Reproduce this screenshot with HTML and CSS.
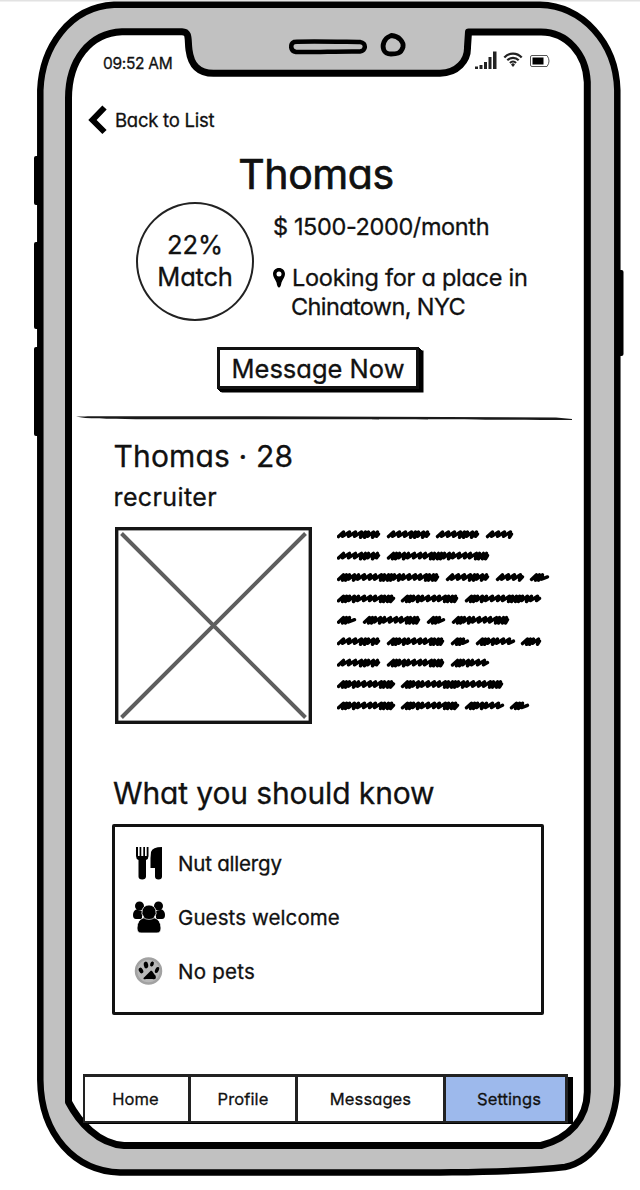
FILE: index.html
```
<!DOCTYPE html>
<html lang="en">
<head>
<meta charset="utf-8">
<title>Thomas</title>
<link rel="stylesheet" href="styles.css">
</head>
<body>
<div class="stage">
  <svg class="frame" width="640" height="1190" viewBox="0 0 640 1190">
    <path d="M0 .8H640" stroke="#e2e2e2" stroke-width="1.6"/>
    <g fill="#000">
      <rect x="34" y="156" width="8" height="49" rx="2"/>
      <rect x="34" y="242" width="8" height="87" rx="2"/>
      <rect x="34" y="347" width="8" height="89" rx="2"/>
      <rect x="614" y="270" width="9.5" height="86" rx="2"/>
    </g>
    <path d="M40.300 90C42 48 69 7 114 4.800H540C582 6 616 42 617.300 90V1085C616 1127 594 1161 565 1167C525 1172 480 1172 440 1172.500H120C75 1171 41 1135 40.300 1080Z" fill="#c1c1c1" stroke="#000" stroke-width="6.500"/>
    <path d="M68.500 100C68 60 90 33 122 31.700H182C190 32 187.500 39 189 50C191 65 198 73.500 214 73.300H440C457 73 468 61 467.500 47L468.500 32H541C567 32 586 54 587.300 82V1092C587 1118 570 1138 541 1145.500H124C98 1144 79 1122 68.500 1102Z" fill="#fff" stroke="#000" stroke-width="7" stroke-linejoin="round"/>
    <path d="M294 42C305 41 350 42 360 42C367 43 366 51 360 51.500C340 51 315 52.500 296 52C290 51 290 44 294 42Z" fill="#c1c1c1" stroke="#000" stroke-width="4.500"/>
    <path d="M391.500 35.500C399 36 404 42 403 47C401 54 396 54 391 54C383 54 382 47 384 42C386 37 388 37 391.500 35.500Z" fill="#c1c1c1" stroke="#000" stroke-width="4.800" stroke-linejoin="round"/>
  </svg>

  <main class="screen">
    <div class="status">
      <span class="time">09:52 AM</span>
      <svg width="76" height="18" viewBox="0 0 76 18">
        <path d="M0 15.500h3v2.500h-3zM4.500 14h3v4h-3zM9 11h3v7h-3zM13.500 6h3v12h-3zM18 .5h3.500V18H18z" fill="#222"/>
        <g fill="none" stroke="#222" stroke-width="2.200"><path d="M29.300 6.500C34 1.200 42 1.200 46.700 6.500M32.300 9.300C35.500 6 40.500 6 43.700 9.300M35 12C36.800 10 39.200 10 41 12"/></g>
        <path d="M38 12L40 13.500L38 16L36 13.500Z" fill="#222"/>
        <path d="M57 4.500H72Q76 10 72 15.500H57Q55.500 15.500 55.500 14V6Q55.500 4.500 57 4.500Z" fill="#fff" stroke="#555"/>
        <path d="M57.500 6.500h11v7h-11z"/>
      </svg>
    </div>

    <a class="back">
      <svg width="20" height="30" viewBox="0 0 20 30"><path d="M16.500 2.500L4.500 15L16.500 27" fill="none" stroke="#000" stroke-width="6"/></svg>
      <span>Back to List</span>
    </a>

    <h1 class="title">Thomas</h1>

    <section class="summary">
      <div class="match"><span>22%</span><span class="label">Match</span></div>
      <div class="facts">
        <p class="price">$ 1500-2000/month</p>
        <div class="place">
          <svg width="12" height="20" viewBox="0 0 12 20"><path fill-rule="evenodd" d="M6 0C2.500 0 0 2.600 0 6C0 9 2 11 3.500 14.500Q4.300 19.500 6 19.500Q7.700 19.500 8.500 14.500C10 11 12 9 12 6C12 2.600 9.500 0 6 0ZM6 3.500A2.500 2.500 0 1 1 6 8.500A2.500 2.500 0 0 1 6 3.500Z"/></svg>
          <p>Looking for a place in<br><span class="city">Chinatown, NYC</span></p>
        </div>
      </div>
    </section>

    <button class="message">Message Now</button>

    <svg class="rule" width="498" height="6" viewBox="0 0 498 6"><path d="M0 .5C10 0 60 .2 180 .2L480 1.500L496 3V4C440 3.500 380 3.600 270 3.200H60C30 2.800 10 3 0 .5Z" fill="#1a1a1a"/></svg>

    <section class="about">
      <h2 class="name">Thomas · 28</h2>
      <p class="job">recruiter</p>
      <div class="media">
        <svg width="197" height="197" viewBox="0 0 197 197"><rect x="1.700" y="1.700" width="193.600" height="193.600" fill="#fff" stroke="#151515" stroke-width="3.400"/><path d="M6.500 6.500L190.500 190.500M190.500 6.500L6.500 190.500" stroke="#5e5e5e" stroke-width="4"/></svg>
        <svg class="scribble" width="216" height="190" viewBox="0 0 216 190" fill="none" stroke="#000" stroke-width="3.400" stroke-linecap="round" stroke-linejoin="round"></svg>
      </div>
    </section>

    <section class="know">
      <h2>What you should know</h2>
      <ul class="card">
        <li>
          <svg width="34" height="34" viewBox="0 0 34 34"><path d="M4 1V10Q4 13 6.500 14V30.500Q6.500 33.500 10.200 33.500T14 30.500V14Q16.500 13 16.500 10V1H14.700V10H13V1H11.300V10H9.300V1H7.600V10H6V1ZM19 6Q20.500 1 30 1V30.500Q30 33.500 26.500 33.500T23 30.500V22H18.500V12Z"/></svg>
          <span class="nut">Nut allergy</span>
        </li>
        <li>
          <svg width="34" height="34" viewBox="0 0 34 34"><circle cx="7.500" cy="6" r="4.500"/><circle cx="26.500" cy="6" r="4.500"/><path d="M4 9.500Q1 11 1 15Q1 19 4 19H10V11ZM30 9.500Q33 11 33 15Q33 19 30 19H24V11Z"/><path d="M17 5a7.300 7.300 0 0 1 5 12.500Q29 20 29 28Q29 33 25 33H9Q5 33 5 28Q5 20 12 17.500A7.300 7.300 0 0 1 17 5Z" stroke="#fff" stroke-width=".8"/><path d="M11 17.500Q17 21.500 23 17.500" fill="none" stroke="#ccc" stroke-width=".8"/></svg>
          <span class="guests">Guests welcome</span>
        </li>
        <li>
          <svg width="34" height="34" viewBox="0 0 34 34"><circle cx="16.500" cy="17" r="12.500" fill="#b8b8b8" stroke="#a2a2a2" stroke-width="2.500"/><g fill="#000"><ellipse cx="9" cy="16.500" rx="2" ry="3" transform="rotate(-30 9 16.500)"/><ellipse cx="14" cy="11" rx="2.200" ry="3.400" transform="rotate(-10 14 11)"/><ellipse cx="20" cy="10" rx="1.800" ry="2.600" transform="rotate(20 20 10)"/><ellipse cx="25" cy="16" rx="1.800" ry="3.200" transform="rotate(25 25 16)"/><path d="M19 16.500C21 17 21.500 20 23.500 21.500Q25 26 20.500 25H14Q11 26 11.500 24Z"/></g></svg>
          <span class="pets">No pets</span>
        </li>
      </ul>
    </section>

    <nav class="tabs">
      <a class="home">Home</a>
      <a>Profile</a>
      <a class="messages">Messages</a>
      <a class="settings">Settings</a>
    </nav>
  </main>
</div>
<script src="scribble.js"></script>
</body>
</html>
```
FILE: styles.css
```
* { box-sizing: border-box; margin: 0; padding: 0; }
body { background: #fff; color: #111; font-family: Inter, "Open Sans", sans-serif; font-feature-settings: "cv11"; -webkit-text-stroke: .3px currentColor; }
svg { display: block; flex: none; }
.stage { display: grid; width: 640px; height: 1190px; }
.frame, .screen { grid-area: 1 / 1; }
h1, h2, p, span, a { white-space: nowrap; }
h1, h2 { font-weight: 400; }
.screen { display: flex; flex-direction: column; align-items: flex-start; }

.status { display: flex; justify-content: space-between; width: 551px; height: 24px; margin-top: 51px; padding-left: 103px; font-size: 15.500px; line-height: 26px; letter-spacing: -.3px; }
.back { display: flex; align-items: center; gap: 7px; margin: 30px 0 0 88px; font-size: 18.500px; line-height: 30px; letter-spacing: -.25px; }
.title { width: 632px; margin-top: 13px; text-align: center; font-size: 41px; line-height: 52px; letter-spacing: -.4px; -webkit-text-stroke-width: .7px; }

.summary { display: flex; gap: 19px; margin: 2px 0 0 136px; }
.match { display: flex; flex-direction: column; align-items: center; width: 118px; height: 119px; padding-top: 24.500px; border: 2px solid #222; border-radius: 50%; font-size: 25.500px; line-height: 32.500px; }
.match .label { letter-spacing: -.2px; }
.facts { font-size: 23.500px; line-height: 28.500px; letter-spacing: -.26px; }
.price { margin-top: 10.500px; letter-spacing: -.38px; }
.place { display: flex; align-items: flex-start; gap: 7px; margin-top: 23px; }
.place svg { margin-top: 4px; }
.city { margin-left: -1px; letter-spacing: -.62px; }

.message { height: 41.500px; width: 202px; margin: 26px 0 0 217px; border: 3px solid #111; background: #fff; box-shadow: 1px 1px 0 #000, 2px 2px 0 #000, 3px 3px 0 #000, 4.500px 3.500px 0 #000; color: inherit; font: inherit; font-feature-settings: inherit; font-size: 25.500px; line-height: 38px; }
.rule { margin: 27.500px 0 0 76px; }

.about { margin: 16.500px 0 0 113.500px; }
.name { font-size: 30px; line-height: 34px; letter-spacing: .15px; }
.job { margin-top: 9px; font-size: 25px; line-height: 30px; letter-spacing: .4px; }
.media { display: flex; gap: 25px; margin: 15.500px 0 0 1.500px; }

.know { margin: 51px 0 0 112px; }
.know h2 { padding-left: 1px; font-size: 30px; line-height: 36px; letter-spacing: -.12px; }
.card { width: 432px; height: 191px; margin-top: 13px; padding: 19px 0 0 17px; border: 3px solid #111; border-radius: 2px; list-style: none; font-size: 20.500px; }
.card li { display: flex; align-items: center; gap: 12px; height: 34px; margin-bottom: 20px; }
.nut { letter-spacing: -.2px; }
.guests { letter-spacing: .1px; }
.pets { letter-spacing: .25px; }

.tabs { display: grid; grid-template-columns: 106px 107px 148px 124px; width: 485px; height: 47px; margin: 58.500px 0 0 83px; background: #fff; box-shadow: 5px 3px 0 #000; font-size: 16.500px; line-height: 44px; letter-spacing: .1px; text-align: center; }
.tabs a { border: 2px solid #222; border-top-width: 3px; border-right-width: 1px; }
.tabs .home { padding-right: 2px; }
.tabs .settings { border-right-width: 3px; background: #9db9ec; padding-left: 7px; }
```
FILE: scribble.js
```
// Placeholder handwriting: each entry is a word's start and end on its line.
const lines = [
  [[0,43],[50,93],[99,142],[149,176]],
  [[0,43],[50,152]],
  [[0,102],[109,152],[159,187],[193,212]],
  [[0,58],[64,121],[128,204]],
  [[0,19],[26,83],[90,108],[115,172]],
  [[0,43],[50,107],[114,132],[139,178],[184,204]],
  [[0,43],[50,107],[114,152]],
  [[0,58],[64,166]],
  [[0,58],[64,122],[128,167],[173,192]]
];
const steps = { light: [6, 6, 6, 4, 3, 5, 4], dense: [3, 3, 5, 4, 6, 6, 5, 6, 3, 4] };
let d = "";
lines.forEach((words, row) => {
  const y = 7.6 + row * 21.4;
  words.forEach(([a, b]) => {
    const w = b - a;
    const pattern = (w > 40 && w < 50) || (w > 25 && w < 30) ? steps.light : steps.dense;
    let x = a + 1.5, i = 0;
    d += `M${x} ${y + 2}`;
    while (x + 6.5 < b) {
      const drop = pattern[i % pattern.length] < 5 ? 1 : 0;
      d += `L${x + 5} ${y - 2.6}L${x + 4} ${y + 1.8 + drop}`;
      x += pattern[i++ % pattern.length];
    }
    d += `L${b - 1.5} ${y - 0.5}`;
  });
});
document.querySelector(".scribble").innerHTML = `<path d="${d}"/>`;
```
